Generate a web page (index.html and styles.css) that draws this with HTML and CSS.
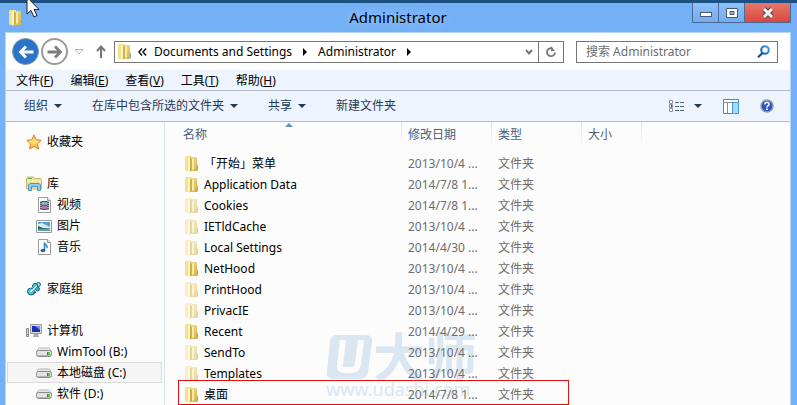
FILE: index.html
```html
<!DOCTYPE html>
<html lang="zh-CN">
<head>
    <meta charset="UTF-8">
    <meta name="viewport" content="width=device-width, initial-scale=1.0">
    <title>Administrator</title>
    <link rel="stylesheet" href="styles.css">
</head>
<body>
    <svg class="defs" aria-hidden="true">
        <defs>
            <linearGradient id="gold" x1="0" x2="1" y1="0" y2="1">
                <stop offset="0" stop-color="#f5e294"/>
                <stop offset="1" stop-color="#d2ab3c"/>
            </linearGradient>
            <linearGradient id="lens" x1="0" x2="1" y1="1" y2="0">
                <stop offset="0" stop-color="#1c54a8"/>
                <stop offset="1" stop-color="#3f9fe8"/>
            </linearGradient>
            <linearGradient id="star" x1="0" x2="0" y1="0" y2="1">
                <stop offset="0" stop-color="#ffb04a"/>
                <stop offset=".5" stop-color="#ffe27a"/>
                <stop offset="1" stop-color="#ff9a2e"/>
            </linearGradient>
            <linearGradient id="drivetop" x1="0" x2="0" y1="0" y2="1">
                <stop offset="0" stop-color="#f4f4f4"/>
                <stop offset="1" stop-color="#cfcfcf"/>
            </linearGradient>
            <symbol id="folder" viewBox="0 0 14 16">
                <path d="M0 1l1-1h6v15H1l-1-1z" fill="#f3e28c"/>
                <path d="M6 1h5l1 1v6l1 1v5l-1 1H6z" fill="url(#gold)"/>
                <path d="M3 2l2-1v13l-1 2-1-1z" fill="#fff6c4"/>
                <path d="M5 1l2 2v11l-3 2 1-2z" fill="#cfae4a"/>
                <path d="M7 3l2-1v11l-2 1z" fill="#f8eba8"/>
                <path d="M12 10h1v3h-1z" fill="#5fb4dc"/>
            </symbol>
            <symbol id="drive" viewBox="0 0 16 10">
                <path d="M3.500 1h9q1 0 1.500 1l1.500 3H.5L2 2q.5-1 1.500-1z" fill="url(#drivetop)" stroke="#b5b5b5"/>
                <rect x=".5" y="3.500" width="15" height="6" rx="2" fill="#e2e2e2" stroke="#8a8a8a"/>
                <path d="M2 8.500h12" stroke="#b4b4b4"/>
                <path d="M11 5h3v3h-3z" fill="#5a6a5a"/>
                <path d="M12 5h2v3h-2z" fill="#3fd332"/>
            </symbol>
            <symbol id="page" viewBox="0 0 13 16">
                <path d="M.5.5h9l3 3v12H.5z" fill="#fff" stroke="#9b9b9b"/>
                <path d="M9.500.5v3h3" fill="#e8e8e8" stroke="#9b9b9b"/>
            </symbol>
        </defs>
    </svg>

    <div class="window">
        <header class="titlebar">
            <svg class="folder-icon title-icon"><use href="#folder"/></svg>
            <h1>Administrator</h1>
            <div class="caption-buttons">
                <button aria-label="最小化"><svg width="12" height="12"><rect x=".5" y="5.500" width="11" height="4" fill="#fff" stroke="#4c5a70"/></svg></button>
                <button aria-label="最大化"><svg width="12" height="12"><path d="M.5 1.500h11v9H.5z" fill="#fff" stroke="#4c5a70"/><path d="M4 4.500h4v3H4z" fill="#86b8f2" stroke="#4c5a70"/></svg></button>
                <button class="close" aria-label="关闭"><svg width="12" height="12"><path d="M2 2l8 8M10 2l-8 8" stroke="#5c3a48" stroke-width="5"/><path d="M2 2l8 8M10 2l-8 8" stroke="#fff" stroke-width="3"/></svg></button>
            </div>
        </header>

        <div class="frame">
            <div class="navbar">
                <button class="round back" aria-label="后退"><svg width="16" height="14" viewBox="0 0 16 14"><path d="M15.500 7H3M8 1.500L2.500 7 8 12.500" fill="none" stroke="#fff" stroke-width="2.800"/></svg></button>
                <button class="round forward" aria-label="前进"><svg width="16" height="14" viewBox="0 0 16 14"><path d="M.5 7H13M8 1.500L13.500 7 8 12.500" fill="none" stroke="#7d7d7d" stroke-width="2.800"/></svg></button>
                <button class="recent" aria-label="最近浏览的位置"><svg width="10" height="6"><path d="M1 .5h8L5 5z" fill="#fff" stroke="#b4b4b4"/></svg></button>
                <button class="up" aria-label="上移"><svg width="10" height="13"><path d="M5 13V2M1 6l4-4.500L9 6" fill="none" stroke="#757575" stroke-width="2"/></svg></button>
                <div class="address">
                    <svg class="folder-icon"><use href="#folder"/></svg>
                    <svg class="chevrons" width="9" height="8"><path d="M4 .5L1 4l3 3.500M8 .5L5 4l3 3.500" fill="none" stroke="#111" stroke-width="1.500"/></svg>
                    <a href="#">Documents and Settings</a>
                    <svg class="crumb-arrow" width="4" height="8"><path d="M0 0l4 4-4 4z"/></svg>
                    <a href="#">Administrator</a>
                    <svg class="crumb-arrow" width="4" height="8"><path d="M0 0l4 4-4 4z"/></svg>
                    <button class="history" aria-label="历史记录"><svg width="8" height="6"><path d="M1 1l3 3.500L7 1" fill="none" stroke="#777" stroke-width="2"/></svg></button>
                    <button class="refresh" aria-label="刷新"><svg width="12" height="12"><path d="M7.500 2.500A4 4 0 1 0 10 6.500" fill="none" stroke="#777" stroke-width="1.800"/><path d="M6 0v5h4z" fill="#777"/></svg></button>
                </div>
                <div class="search">
                    <input type="text" placeholder="搜索 Administrator" aria-label="搜索 Administrator">
                    <svg width="13" height="13"><circle cx="8" cy="5" r="3.800" fill="#f4faff" stroke="url(#lens)" stroke-width="2"/><path d="M5.500 8L1 12.300" stroke="#1c4c9c" stroke-width="2.200"/></svg>
                </div>
            </div>

            <nav class="menubar">
                <button>文件(<u>F</u>)</button>
                <button>编辑(<u>E</u>)</button>
                <button>查看(<u>V</u>)</button>
                <button>工具(<u>T</u>)</button>
                <button>帮助(<u>H</u>)</button>
            </nav>

            <div class="toolbar">
                <button>组织<i class="caret"></i></button>
                <button>在库中包含所选的文件夹<i class="caret"></i></button>
                <button>共享<i class="caret"></i></button>
                <button>新建文件夹</button>
                <div class="view-tools">
                    <button aria-label="更改视图"><svg width="16" height="13"><g fill="#fff" stroke="#8a929c"><path d="M.5.5h3v3h-3zM.5 4.500h3v3h-3zM.5 8.500h3v3h-3z"/></g><path d="M6 2.500h4M11 2.500h4M6 6.500h4M11 6.500h4M6 10.500h4M11 10.500h4" stroke="#56677a"/><path d="M2 5h1v2H2z" fill="#b03030"/></svg><i class="caret"></i></button>
                    <button aria-label="显示预览窗格"><svg width="16" height="15"><path d="M.5.5h15v14H.5z" fill="#fff" stroke="#777c84"/><path d="M1 3.500h14M4.500 4v10" stroke="#8b9097"/><path d="M9.500 3.500h6v11h-6z" fill="#a9d8ff" stroke="#3d9de8"/></svg></button>
                    <button aria-label="帮助"><svg width="14" height="14"><circle cx="7" cy="7" r="6" fill="#2a55c4" stroke="#8f9cb4" stroke-width="1.500"/><path d="M4.800 5.500c0-3 4.700-2.600 4.200 0C8.700 6.700 7 6.600 7 8.500" fill="none" stroke="#fff" stroke-width="1.600"/><path d="M6 9.500h2v1.500H6z" fill="#fff"/></svg></button>
                </div>
            </div>

            <main class="body">
                <aside class="tree">
                    <a class="node" href="#"><svg width="16" height="16"><path d="M8 1l2.200 4.700 5.100.6-3.800 3.500 1 5.200L8 12.500 3.500 15l1-5.200L.7 6.300l5.100-.6z" fill="url(#star)" stroke="#e08424"/></svg>收藏夹</a>
                    <a class="node gap" href="#"><svg width="16" height="16"><path d="M.5 3l1-2h6l1 1.500h6l1 1.500v9h-15z" fill="#f0df98" stroke="#cdb966"/><path d="M2 2.500h4" stroke="#58b04a"/><path d="M1 5h14" stroke="#fff6cc"/><path d="M2.500 14.500V9l1.500-1.500h9L14.500 9v5.500h-3v-4h-6v4z" fill="#8acdf0" stroke="#4a96c6"/></svg>库</a>
                    <a class="node sub" href="#"><svg width="16" height="16"><use href="#page" x="2" width="13" height="16"/><path d="M4 4h9v9H4z" fill="#4e5260"/><path d="M6 5h5v3H6z" fill="#8fb0c0"/><path d="M6 9h5v3H6z" fill="#a878a8"/><path d="M5 4v9M12 4v9" stroke="#fff" stroke-dasharray="1 1"/></svg>视频</a>
                    <a class="node sub" href="#"><svg width="16" height="16"><path d="M.5 2.500h15v12H.5z" fill="#fff" stroke="#999"/><path d="M2 4h12v9H2z" fill="#4c9fd8"/><path d="M2 6l4-1 8 4v2H2z" fill="#d6ecf5"/><path d="M2 8l5 2 7 .5V11H2z" fill="#2e6650"/><path d="M2 11h12v2H2z" fill="#5a9fc0"/></svg>图片</a>
                    <a class="node sub" href="#"><svg width="16" height="16"><use href="#page" x="2" width="13" height="16"/><path d="M8.500 11V3.500c0 2.500 3.500 2 2.500 5.500" fill="none" stroke="#1e86c8" stroke-width="1.500"/><ellipse cx="7" cy="11.500" rx="2.300" ry="1.700" fill="#1b5fae"/></svg>音乐</a>
                    <a class="node gap" href="#"><svg width="16" height="16"><g stroke="#17677c"><circle cx="12.500" cy="3.500" r="2" fill="#7adcea"/><circle cx="9" cy="5" r="2.500" fill="#53c6dc"/><circle cx="11.500" cy="8" r="2" fill="#3aaccc"/><circle cx="5" cy="10.500" r="3.500" fill="#49bcd8"/></g><path d="M4 11l7-6" stroke="#d5f6fb" stroke-width="1.500"/><path d="M8 12l2-1" stroke="#17677c" stroke-width="1.500"/></svg>家庭组</a>
                    <a class="node gap" href="#"><svg width="16" height="16"><path d="M.5 5.500h2v8h-2z" fill="#ddd" stroke="#888"/><path d="M1 11h1v1H1z" fill="#3fd332"/><path d="M4.500 1.500h11v9h-11z" fill="#dcdcdc" stroke="#9a9a9a"/><path d="M6 3h8v6H6z" fill="#1b2fb0"/><path d="M9 3h5v4z" fill="#6f93ee"/><path d="M8 11h4l1 3H7z" fill="#a8a8a8"/></svg>计算机</a>
                    <a class="node sub" href="#"><svg class="drive"><use href="#drive"/></svg>WimTool (B:)</a>
                    <a class="node sub selected" href="#"><svg class="drive"><use href="#drive"/></svg>本地磁盘 (C:)</a>
                    <a class="node sub" href="#"><svg class="drive"><use href="#drive"/></svg>软件 (D:)</a>
                </aside>

                <section class="list">
                    <div class="watermark" aria-hidden="true">
                        <div class="brand">
                            <svg width="47" height="44" viewBox="0 0 47 44"><path d="M10 0h30q7 0 6 7l-4 30q-1 7-8 7H6q-6 0-5-7L4 6q1-6 6-6z" fill="#dae7f2"/><path d="M17 5l-3 25q-1 5 4 5h7q6 0 7-6l3-24" fill="none" stroke="#fcfcfc" stroke-width="6"/></svg>
                            <span>大师</span>
                        </div>
                        <div class="site">www.udashi.com</div>
                    </div>
                    <table>
                        <colgroup>
                            <col class="col-name"><col class="col-date"><col class="col-type"><col class="col-size"><col>
                        </colgroup>
                        <thead>
                            <tr><th class="sorted">名称</th><th>修改日期</th><th>类型</th><th>大小</th><th></th></tr>
                        </thead>
                        <tbody>
                            <tr><td><svg class="folder-icon"><use href="#folder"/></svg>「开始」菜单</td><td>2013/10/4 ...</td><td>文件夹</td><td></td><td></td></tr>
                            <tr><td><svg class="folder-icon"><use href="#folder"/></svg>Application Data</td><td>2014/7/8 1...</td><td>文件夹</td><td></td><td></td></tr>
                            <tr class="hidden-item"><td><svg class="folder-icon"><use href="#folder"/></svg>Cookies</td><td>2014/7/8 1...</td><td>文件夹</td><td></td><td></td></tr>
                            <tr class="hidden-item"><td><svg class="folder-icon"><use href="#folder"/></svg>IETldCache</td><td>2013/10/4 ...</td><td>文件夹</td><td></td><td></td></tr>
                            <tr class="hidden-item"><td><svg class="folder-icon"><use href="#folder"/></svg>Local Settings</td><td>2014/4/30 ...</td><td>文件夹</td><td></td><td></td></tr>
                            <tr><td><svg class="folder-icon"><use href="#folder"/></svg>NetHood</td><td>2013/10/4 ...</td><td>文件夹</td><td></td><td></td></tr>
                            <tr class="hidden-item"><td><svg class="folder-icon"><use href="#folder"/></svg>PrintHood</td><td>2013/10/4 ...</td><td>文件夹</td><td></td><td></td></tr>
                            <tr class="hidden-item"><td><svg class="folder-icon"><use href="#folder"/></svg>PrivacIE</td><td>2013/10/4 ...</td><td>文件夹</td><td></td><td></td></tr>
                            <tr><td><svg class="folder-icon"><use href="#folder"/></svg>Recent</td><td>2014/4/29 ...</td><td>文件夹</td><td></td><td></td></tr>
                            <tr class="hidden-item"><td><svg class="folder-icon"><use href="#folder"/></svg>SendTo</td><td>2013/10/4 ...</td><td>文件夹</td><td></td><td></td></tr>
                            <tr class="hidden-item"><td><svg class="folder-icon"><use href="#folder"/></svg>Templates</td><td>2013/10/4 ...</td><td>文件夹</td><td></td><td></td></tr>
                            <tr class="marked"><td><svg class="folder-icon"><use href="#folder"/></svg>桌面</td><td>2014/7/8 1...</td><td>文件夹</td><td></td><td></td></tr>
                        </tbody>
                    </table>
                </section>
            </main>
        </div>

        <svg class="cursor" width="14" height="20" viewBox="0 0 14 20"><path d="M1-3v17l4-3.500 3 6.500 3-1.500-3-6h5z" fill="#fff" stroke="#222"/></svg>
    </div>
</body>
</html>
```

FILE: styles.css
```css
* {
    box-sizing: border-box;
}
body {
    margin: 0;
    font-family: "Noto Sans", "Noto Sans CJK SC", sans-serif;
    font-size: 12px;
    line-height: 20px;
    color: #000;
    overflow: hidden;
}
button {
    padding: 0;
    border: none;
    background: none;
    font: inherit;
    color: inherit;
}
a {
    color: inherit;
    text-decoration: none;
}
svg {
    flex: none;
}
.defs {
    position: absolute;
    width: 0;
    height: 0;
}
.window {
    min-height: 100vh;
    padding: 0 6px 0 5px;
    background: #73b0f6;
    border-top: 3px solid #1b5282;
    display: flex;
    flex-direction: column;
}

/* title bar */
.titlebar {
    height: 29px;
    display: grid;
    grid-template-columns: 1fr auto 1fr;
    align-items: center;
}
.titlebar h1 {
    margin: 0;
    padding-bottom: 2px;
    font-size: 15px;
    font-weight: normal;
    text-shadow: 0 0 8px #b4d6fb;
}
.folder-icon {
    width: 14px;
    height: 16px;
}
.title-icon {
    margin-left: 4px;
}
.caption-buttons {
    display: flex;
    align-self: start;
    justify-self: end;
    border: 1px solid #4a6a9a;
    border-top: none;
}
.caption-buttons button {
    width: 26px;
    height: 19px;
    display: flex;
    align-items: center;
    justify-content: center;
    background: linear-gradient(#8fc1f9, #73acee);
    border-right: 1px solid #4a6a9a;
}
.caption-buttons .close {
    width: 45px;
    background: linear-gradient(#e8776c, #d9493c);
    border-right: none;
}

/* address row */
.frame {
    flex: 1;
    display: flex;
    flex-direction: column;
    background: #fcfcfc;
    border: 1px solid #b5d5fa;
    border-bottom: none;
}
.navbar {
    height: 37px;
    display: flex;
    align-items: center;
    padding: 0 12px 0 6px;
    background: #fff;
}
.round {
    width: 27px;
    height: 27px;
    margin-right: 2px;
    border-radius: 50%;
    display: flex;
    align-items: center;
    justify-content: center;
    flex: none;
}
.back {
    background: #2b74c8;
    border: 1px solid #8a98a8;
}
.forward {
    border: 2px solid #9a9a9a;
}
.recent, .up {
    display: flex;
    margin-left: 4px;
}
.up {
    margin: 0 8px 0 12px;
}
.address {
    flex: 1;
    height: 22px;
    display: flex;
    align-items: center;
    padding-left: 3px;
    border: 1px solid #767676;
}
.chevrons {
    margin: 0 7px 0 6px;
}
.crumb-arrow {
    margin: 0 11px;
}
.history, .refresh {
    height: 20px;
    display: flex;
    align-items: center;
    justify-content: center;
}
.history {
    width: 18px;
    margin-left: auto;
}
.refresh {
    width: 25px;
    border-left: 1px solid #767676;
}
.search {
    width: 202px;
    height: 22px;
    margin-left: 12px;
    padding: 0 7px 0 9px;
    display: flex;
    align-items: center;
    border: 1px solid #767676;
}
.search input {
    flex: 1;
    min-width: 0;
    padding: 0;
    border: none;
    outline: none;
    background: none;
    font: inherit;
}
.search input::placeholder {
    color: #6d6d6d;
}

/* menu and command bar */
.menubar {
    height: 21px;
    display: flex;
    gap: 17px;
    padding-left: 10px;
    line-height: 22px;
    background: #edf4fd;
    border-bottom: 1px solid #b3bcc8;
}
.toolbar {
    height: 31px;
    display: flex;
    gap: 30px;
    padding: 0 16px 0 18px;
    background: #edf4fd;
    border-bottom: 1px solid #b3bcc8;
    color: #1e395b;
}
.toolbar button {
    display: flex;
    align-items: center;
}
.caret {
    margin-left: 6px;
    border: 4px solid transparent;
    border-top-color: #1e395b;
    border-bottom: none;
}
.view-tools {
    display: flex;
    gap: 21px;
    margin-left: auto;
}
.view-tools .caret {
    margin-left: 9px;
}

/* navigation pane */
.body {
    flex: 1;
    display: flex;
}
.tree {
    width: 159px;
    padding: 9px 2px 0 1px;
    border-right: 1px solid #d3e3f5;
    flex: none;
}
.node {
    height: 21px;
    display: flex;
    align-items: center;
    gap: 5px;
    padding-left: 19px;
}
.sub {
    padding-left: 29px;
}
.gap {
    margin-top: 21px;
}
.selected {
    padding-left: 28px;
    background: #f5f5f5;
    border: 1px solid #dadada;
}
.drive {
    width: 16px;
    height: 10px;
}

/* file list */
.list {
    flex: 1;
    min-width: 0;
    position: relative;
}
table {
    position: relative;
    width: 100%;
    table-layout: fixed;
    border-collapse: collapse;
}
.col-name {
    width: 237px;
}
.col-date, .col-type {
    width: 90px;
}
.col-size {
    width: 60px;
}
th {
    height: 24px;
    padding: 2px 0 0 6px;
    font-weight: normal;
    text-align: left;
    color: #4c607a;
    background: linear-gradient(#d5e4f2, #fcfcfc) no-repeat right / 1px 100%;
}
th:last-child {
    background: none;
}
th:first-child {
    padding-left: 18px;
}
.sorted::before {
    content: "";
    position: absolute;
    top: 1px;
    left: 120px;
    border: 4px solid transparent;
    border-bottom-color: #5d94b8;
    border-top: none;
}
tbody::before {
    content: "";
    display: block;
    height: 7px;
}
td {
    height: 21px;
    padding: 0 0 0 6px;
    color: #6d6d6d;
    white-space: nowrap;
}
td:first-child {
    padding-left: 20px;
    color: #000;
}
td .folder-icon {
    margin-right: 5px;
    vertical-align: middle;
}
.hidden-item .folder-icon {
    opacity: .5;
}
.marked td:first-child::after {
    content: "";
    position: absolute;
    left: 13px;
    bottom: 0;
    width: 389px;
    height: 23px;
    border: 1px solid #e01010;
}
.watermark {
    position: absolute;
    left: 161px;
    top: 213px;
    color: #dae7f2;
}
.brand {
    display: flex;
    align-items: center;
    height: 44px;
    font-size: 52px;
    font-weight: bold;
}
.site {
    font-size: 18px;
}

/* mouse pointer */
.cursor {
    position: absolute;
    left: 26px;
    top: 0;
}
```
